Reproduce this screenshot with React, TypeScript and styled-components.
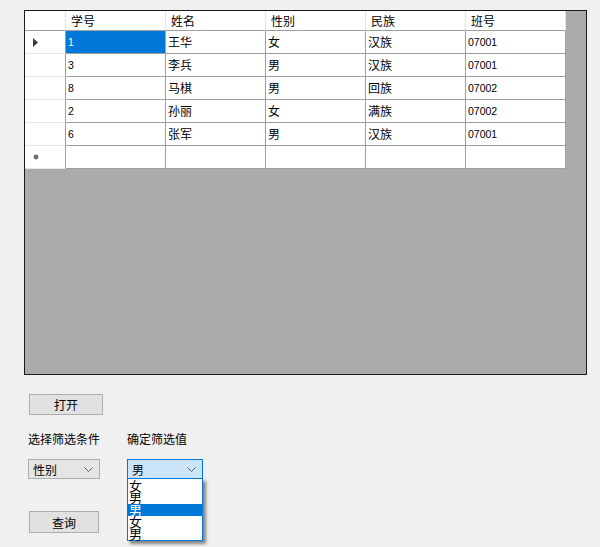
import React from 'react';
import styled, { createGlobalStyle } from 'styled-components';

interface Student {
    id: string;
    name: string;
    sex: string;
    nation: string;
    cls: string;
}

const students: Student[] = [
    { id: '1', name: '王华', sex: '女', nation: '汉族', cls: '07001' },
    { id: '3', name: '李兵', sex: '男', nation: '汉族', cls: '07001' },
    { id: '8', name: '马棋', sex: '男', nation: '回族', cls: '07002' },
    { id: '2', name: '孙丽', sex: '女', nation: '满族', cls: '07002' },
    { id: '6', name: '张军', sex: '男', nation: '汉族', cls: '07001' },
];

const headers = ['学号', '姓名', '性别', '民族', '班号'];
const options = ['女', '男', '男', '女', '男'];

const cjk = `"Noto Sans CJK SC", "Microsoft YaHei", sans-serif`;
const digits = `"Liberation Sans", Arial, "Noto Sans CJK SC", sans-serif`;

function ChevronDown() {
    return (
        <svg width="9" height="5" viewBox="0 0 9 5">
            <polyline points="0.5,0.5 4.5,4.5 8.5,0.5" fill="none" stroke="#606060" strokeWidth="1" />
        </svg>
    );
}

function App() {
    return (
        <Page>
            <GlobalStyle />
            <DataGrid>
                <Table>
                    <CornerCell />
                    {headers.map(h => (
                        <HeaderCell key={h}>{h}</HeaderCell>
                    ))}
                    {students.map((s, i) => (
                        <React.Fragment key={s.id}>
                            <RowHeader>
                                {i === 0 ? (
                                    <svg width="5" height="9" viewBox="0 0 5 9">
                                        <polygon points="0,0 5,4.5 0,9" fill="#3c3c3c" />
                                    </svg>
                                ) : null}
                            </RowHeader>
                            {[s.id, s.name, s.sex, s.nation, s.cls].map((v, j) => (
                                <Cell key={j} selected={i === 0 && j === 0} numeric={j === 0 || j === 4}>
                                    {v}
                                </Cell>
                            ))}
                        </React.Fragment>
                    ))}
                    <RowHeader>
                        <svg width="6" height="6" viewBox="0 0 6 6">
                            <circle cx="3" cy="3" r="2.4" fill="#6a6a6a" />
                        </svg>
                    </RowHeader>
                    {headers.map(h => (
                        <Cell key={h} />
                    ))}
                </Table>
            </DataGrid>

            <Controls>
                <Button width={74}>打开</Button>
                <FilterGrid>
                    <Label>选择筛选条件</Label>
                    <Label>确定筛选值</Label>
                    <Combo width={72}>
                        <span>性别</span>
                        <ChevronDown />
                    </Combo>
                    <ComboWrap>
                        <Combo width={76} active>
                            <span>男</span>
                            <ChevronDown />
                        </Combo>
                        <DropList>
                            {options.map((o, i) => (
                                <DropItem key={i} selected={i === 2}>
                                    {o}
                                </DropItem>
                            ))}
                        </DropList>
                    </ComboWrap>
                </FilterGrid>
                <QueryButton width={70}>查询</QueryButton>
            </Controls>
        </Page>
    );
}

const GlobalStyle = createGlobalStyle`
    html, body {
        margin: 0;
        padding: 0;
        background: #f0f0f0;
        height: 547px;
        overflow: hidden;
    }

    * {
        box-sizing: border-box;
    }
`;

const Page = styled.div`
    padding: 10px 0 0 24px;

    display: flex;
    flex-direction: column;

    font-family: ${cjk};
    font-size: 12px;
    color: #000;
`;

const DataGrid = styled.div`
    width: 563px;
    height: 365px;

    border: 1px solid #1a1a1a;
    background: #ababab;
`;

const Table = styled.div`
    display: grid;
    grid-template-columns: 41px repeat(5, 100px);
    grid-template-rows: 20px;
    grid-auto-rows: 23px;
    width: fit-content;
`;

const CornerCell = styled.div`
    background: #fff;
    border-right: 1px solid #e4e4e4;
    border-bottom: 1px solid #a0a0a0;
`;

const HeaderCell = styled.div`
    padding-left: 5px;

    display: flex;
    align-items: center;

    background: #fff;
    border-right: 1px solid #e4e4e4;
    border-bottom: 1px solid #a0a0a0;
    line-height: 1;
`;

const RowHeader = styled.div`
    padding-left: 8px;

    display: flex;
    align-items: center;

    background: #fff;
    border-right: 1px solid #a0a0a0;
    border-bottom: 1px solid #e6e6e6;
`;

const Cell = styled.div<{ selected?: boolean; numeric?: boolean }>`
    padding-left: 2px;

    display: flex;
    align-items: center;

    background: ${props => (props.selected ? '#0078d7' : '#fff')};
    color: ${props => (props.selected ? '#fff' : '#000')};
    border-right: 1px solid #a0a0a0;
    border-bottom: 1px solid #a0a0a0;
    font-family: ${props => (props.numeric ? digits : cjk)};
    font-size: ${props => (props.numeric ? '10.5px' : '12px')};
    line-height: 1;
`;

const Controls = styled.div`
    padding-left: 4px;

    display: flex;
    flex-direction: column;
    align-items: flex-start;
`;

const Button = styled.div<{ width: number }>`
    width: ${props => props.width}px;
    height: 21px;
    margin-top: 19px;
    margin-left: 1px;

    display: flex;
    justify-content: center;
    align-items: center;

    border: 1px solid #adadad;
    background: #e1e1e1;
    font-size: 12px;
`;

const QueryButton = styled(Button)`
    height: 22px;
    margin-top: 32px;
`;

const FilterGrid = styled.div`
    margin-top: 16px;

    display: grid;
    grid-template-columns: 99px auto;
    row-gap: 12px;
`;

const Label = styled.div`
    height: 16px;
    line-height: 16px;
    font-size: 12px;
`;

const ComboWrap = styled.div`
    position: relative;
`;

const Combo = styled.div<{ width: number; active?: boolean }>`
    width: ${props => props.width}px;
    height: 20px;
    padding: 0 6px 0 4px;

    display: flex;
    justify-content: space-between;
    align-items: center;

    border: 1px solid ${props => (props.active ? '#0078d7' : '#adadad')};
    background: ${props => (props.active ? '#cce4f7' : '#e5e5e5')};
    font-size: 12px;
`;

const DropList = styled.div`
    position: absolute;
    top: 19px;
    left: 0;
    width: 76px;
    height: 63px;
    padding-top: 1px;

    display: flex;
    flex-direction: column;

    border: 1px solid #0078d7;
    background: #fff;
    box-shadow: 3px 3px 3px rgba(0, 0, 0, 0.45);
    z-index: 2;
`;

const DropItem = styled.div<{ selected?: boolean }>`
    height: 12px;
    padding-left: 1px;

    background: ${props => (props.selected ? '#0078d7' : 'transparent')};
    color: ${props => (props.selected ? '#fff' : '#000')};
    font-size: 13px;
    line-height: 12px;
    overflow: visible;
    white-space: nowrap;
`;

export default App;
